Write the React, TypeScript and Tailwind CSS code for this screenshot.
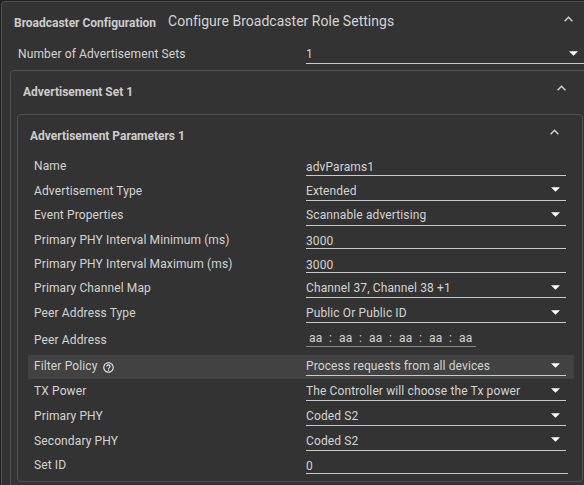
import clsx from 'clsx'

type RowKind = 'text' | 'select' | 'address'

interface Field {
  label: string
  value: string
  kind: RowKind
  // spacing below the row
  gap?: string
  line?: string
  arrow?: string
  width?: string
  help?: boolean
  active?: boolean
}

const FIELDS: Field[] = [
  { label: 'Name', value: 'advParams1', kind: 'text', gap: 'mb-px', line: 'h-[21px]' },
  { label: 'Advertisement Type', value: 'Extended', kind: 'select', arrow: 'mt-[7px]' },
  { label: 'Event Properties', value: 'Scannable advertising', kind: 'select', gap: 'mb-px', line: 'h-[22px]' },
  { label: 'Primary PHY Interval Minimum (ms)', value: '3000', kind: 'text' },
  { label: 'Primary PHY Interval Maximum (ms)', value: '3000', kind: 'text' },
  { label: 'Primary Channel Map', value: 'Channel 37, Channel 38 +1', kind: 'select', gap: 'mb-px' },
  { label: 'Peer Address Type', value: 'Public Or Public ID', kind: 'select', gap: 'mb-[3px]' },
  { label: 'Peer Address', value: 'aa:aa:aa:aa:aa:aa', kind: 'address', gap: 'mb-[2px]' },
  { label: 'Filter Policy', value: 'Process requests from all devices', kind: 'select', gap: 'mb-px', help: true, active: true },
  { label: 'TX Power', value: 'The Controller will choose the Tx power', kind: 'select', gap: 'mb-px' },
  { label: 'Primary PHY', value: 'Coded S2', kind: 'select', gap: 'mb-px' },
  { label: 'Secondary PHY', value: 'Coded S2', kind: 'select', arrow: 'mt-[7px]' },
  { label: 'Set ID', value: '0', kind: 'text', width: 'w-[262px]' },
]

function Chevron() {
  return (
    <svg width="9" height="6" viewBox="0 0 9 6" fill="none" stroke="#d0d0d0" strokeWidth="1.5">
      <path d="M0.6 5.2 4.5 1.2 8.4 5.2" />
    </svg>
  )
}

function Arrow({ className }: { className?: string }) {
  return (
    <svg className={clsx('shrink-0', className)} width="10" height="5" viewBox="0 0 10 5" fill="#fff">
      <path d="M0 0.3h9L4.5 4.8z" />
    </svg>
  )
}

function HelpIcon() {
  return (
    <svg className="mt-[7px] ml-[5px]" width="11" height="11" viewBox="1.5 1.5 21 21" fill="#f0f0f0">
      <path d="M11 18h2v-2h-2v2zm1-16C6.48 2 2 6.48 2 12s4.48 10 10 10 10-4.48 10-10S17.52 2 12 2zm0 18c-4.41 0-8-3.59-8-8s3.59-8 8-8 8 3.59 8 8-3.59 8-8 8zm0-14c-2.21 0-4 1.79-4 4h2c0-1.1.9-2 2-2s2 .9 2 2c0 2-3 1.75-3 5h2c0-2.25 3-2.5 3-5 0-2.21-1.79-4-4-4z" />
    </svg>
  )
}

function AddressInput({ value }: { value: string }) {
  return (
    <div className="flex h-[18px] w-[170px] border-b border-[#858585] pl-[3px] leading-[18px]">
      {value.split(':').map((octet, idx) => (
        <div key={idx} className="flex w-[30px] shrink-0">
          <span className="w-[20px]">{octet}</span>
          {idx < 5 && <span>:</span>}
        </div>
      ))}
    </div>
  )
}

function FieldRow({ field }: { field: Field }) {
  const isText = field.kind === 'text'

  return (
    <div className={clsx('flex h-6 pl-[6px]', field.gap, field.active && 'bg-[#424242]')}>
      <div className="flex w-[272px] shrink-0 leading-[22px]">
        {field.label}
        {field.help && <HelpIcon />}
      </div>
      {field.kind === 'address' ? (
        <AddressInput value={field.value} />
      ) : (
        <div
          className={clsx(
            'flex justify-between border-b border-[#cacaca] pr-[5px]',
            isText ? 'leading-[24px]' : 'leading-[22px]',
            field.line ?? (isText ? 'h-5' : 'h-[21px]'),
            field.width ?? 'w-[260px]',
          )}
        >
          <span>{field.value}</span>
          {field.kind === 'select' && <Arrow className={field.arrow ?? 'mt-2'} />}
        </div>
      )}
    </div>
  )
}

const TITLE = 'text-[12px] leading-[42px] font-bold tracking-[-0.01px] text-[#cccccc]'

export default function App() {
  return (
    <div className="h-[485px] w-[584px] overflow-hidden bg-[#222] pt-px pl-px font-[Roboto,sans-serif] text-[12px] tracking-[0.12px] whitespace-nowrap text-[#d4d4d4]">
      <div className="h-[490px] w-[600px] rounded-tl-[4px] border border-[#505050] bg-[#333]">
        <div className="flex h-[38px] w-[582px]">
          <span className={clsx(TITLE, 'w-[166px] shrink-0 pl-3')}>Broadcaster Configuration</span>
          <span className="text-[14px] leading-[38px] tracking-[0.02px]">Configure Broadcaster Role Settings</span>
          <div className="mt-[14px] mr-[11px] ml-auto">
            <Chevron />
          </div>
        </div>
        <div className="flex h-[30px] pl-4">
          <span className="w-[288px] shrink-0 leading-[28px]">Number of Advertisement Sets</span>
          <div className="flex h-6 w-[278px] justify-between border-b border-[#cacaca] pr-[5px] leading-[28px]">
            <span>1</span>
            <Arrow className="mt-[11px]" />
          </div>
        </div>
        <div className="ml-2 h-[430px] w-[592px] rounded-tl-[4px] border border-[#505050]">
          <div className="flex h-[43px] w-[573px] pl-3">
            <span className={TITLE}>Advertisement Set 1</span>
            <div className="mt-[14px] mr-[18px] ml-auto">
              <Chevron />
            </div>
          </div>
          <div className="ml-[6px] h-[368px] w-[566px] rounded-[4px] border border-[#505050]">
            <div className="flex h-[40px] pl-3">
              <span className={TITLE}>Advertisement Parameters 1</span>
              <div className="mt-[14px] mr-[23px] ml-auto">
                <Chevron />
              </div>
            </div>
            <div className="mr-[8px] ml-[10px]">
              {FIELDS.map((field) => (
                <FieldRow key={field.label} field={field} />
              ))}
            </div>
          </div>
        </div>
      </div>
    </div>
  )
}
